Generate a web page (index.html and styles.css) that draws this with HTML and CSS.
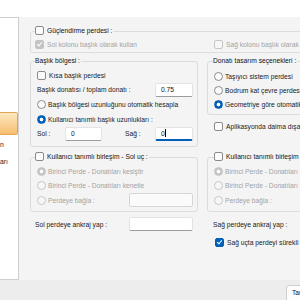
FILE: index.html
```html
<!DOCTYPE html>
<html>
<head>
<meta charset="utf-8">
<link rel="stylesheet" href="styles.css">
</head>
<body>
<div class="top"></div>
<div class="main">
  <aside class="side">
    <div class="side-btn"></div>
    <div class="side-txt first">n</div>
    <div class="side-txt second">arı</div>
  </aside>
  <div class="content">
    <fieldset class="grp g1">
      <legend><span class="cb"></span>Güçlendirme perdesi :</legend>
      <div class="cols">
        <div class="row dis"><span class="cb chk off"></span>Sol kolonu başlık olarak kullan</div>
        <div class="row dis"><span class="cb off"></span>Sağ kolonu başlık olarak kullan</div>
      </div>
    </fieldset>
    <div class="grid">
      <fieldset class="grp g2">
        <legend>Başlık bölgesi :</legend>
        <div class="row in"><span class="cb"></span>Kısa başlık perdesi</div>
        <div class="row in tall">Başlık donatısı / toplam donatı :<span class="inp w38 push">0.75</span></div>
        <div class="row in tall"><span class="rb"></span>Başlık bölgesi uzunluğunu otomatik hesapla</div>
        <div class="row in"><span class="rb on"></span>Kullanıcı tanımlı başlık uzunlukları :</div>
        <div class="row in tall"><span class="lbl-sol">Sol :</span><span class="inp w37">0</span><span class="lbl-sag">Sağ :</span><span class="inp w38 push focus">0<span class="caret"></span></span></div>
      </fieldset>
      <div class="rcol">
        <fieldset class="grp g3">
          <legend>Donatı tasarım seçenekleri :</legend>
          <div class="row in"><span class="rb"></span>Taşıyıcı sistem perdesi</div>
          <div class="row in"><span class="rb"></span>Bodrum kat çevre perdesi</div>
          <div class="row in"><span class="rb on"></span>Geometriye göre otomatik</div>
        </fieldset>
        <div class="row apl"><span class="cb"></span>Aplikasyonda daima dışarıda</div>
      </div>
      <fieldset class="grp g4">
        <legend><span class="cb"></span>Kullanıcı tanımlı birleşim - Sol uç :</legend>
        <div class="row in dis"><span class="rb on off"></span>Birinci Perde - Donatıları kesiştir</div>
        <div class="row in tall dis"><span class="rb off"></span>Birinci Perde - Donatıları kenetle</div>
        <div class="row in dis"><span class="rb off"></span>Perdeye bağla :<span class="inp w64 push disabled"></span></div>
      </fieldset>
      <fieldset class="grp g5">
        <legend><span class="cb"></span>Kullanıcı tanımlı birleşim - Sağ uç :</legend>
        <div class="row in dis"><span class="rb on off"></span>Birinci Perde - Donatıları kesiştir</div>
        <div class="row in tall dis"><span class="rb off"></span>Birinci Perde - Donatıları kenetle</div>
        <div class="row in dis"><span class="rb off"></span>Perdeye bağla :</div>
      </fieldset>
      <div class="row ank">Sol perdeye ankraj yap :<span class="inp w64 push"></span></div>
      <div class="rcol">
        <div class="row ank r">Sağ perdeye ankraj yap :</div>
        <div class="row sur"><span class="cb chk"></span>Sağ uçta perdeyi sürekli kabul et</div>
      </div>
    </div>
  </div>
</div>
<div class="footer"><span class="btn">Tamam</span></div>
</body>
</html>
```
FILE: styles.css
```css
body {
  margin: 0;
  width: 300px;
  height: 300px;
  overflow: hidden;
  background: #fff;
  color: #1a1a1a;
  font-family: "Liberation Sans", Arial, sans-serif;
  font-size: 6.7px;
}
.top {
  height: 17px;
  background: #fff;
}
.main {
  display: flex;
  height: 263px;
  background: #f4f4f4;
}
.side {
  flex: none;
  width: 19px;
  box-sizing: border-box;
  background: #fff;
  border: 1px solid #cfcfcf;
  border-left: 0;
  overflow: hidden;
}
.side-btn {
  margin-top: 94px;
  height: 23px;
  box-sizing: border-box;
  background: linear-gradient(#fde8c0, #f6bd70);
  border: 1px solid #e3a650;
  border-left: 0;
  border-radius: 0 2px 2px 0;
}
.side-txt {
  height: 10px;
  line-height: 10px;
  white-space: nowrap;
}
.side-txt.first { margin-top: 5px; }
.side-txt.second { margin-top: 7px; }

.content {
  flex: none;
  width: 400px;
  padding: 9px 0 0 11px;
}
.grp {
  margin: 0;
  min-width: 0;
  border: 1px solid #dcdcdc;
  border-radius: 3px;
  padding: 0 4px;
}
legend {
  padding: 0 1px 0 0;
  height: 10px;
  line-height: 10px;
  color: #111;
  white-space: nowrap;
}
.g1 { padding-top: 1px; padding-bottom: 1px; }
.g2 { padding-top: 2px; padding-bottom: 5px; }
.g3 { padding-top: 3px; padding-bottom: 3px; }
.g4, .g5 { padding-top: 2px; padding-bottom: 4px; }
.g3 legend { margin-left: 1px; }
.g5 legend { margin-left: 2px; }

.cols {
  display: grid;
  grid-template-columns: 179px 1fr;
}
.grid {
  margin-top: 3px;
  display: grid;
  grid-template-columns: 168px 1fr;
  column-gap: 9px;
  row-gap: 5px;
}
.row {
  height: 14px;
  display: flex;
  align-items: center;
  white-space: nowrap;
}
.row.tall { height: 15px; }
.row.in { padding-left: 2px; }
.row.apl { margin-top: 4px; padding-left: 7px; }
.row.ank { padding: 0 5px; }
.row.ank.r { padding-left: 6px; }
.row.sur { margin-top: 4px; padding-left: 8px; }
.dis { color: #a3a3a3; }

.cb, .rb {
  flex: none;
  display: inline-block;
  position: relative;
  box-sizing: border-box;
  width: 9px;
  height: 9px;
  margin-right: 3px;
  border: 1px solid #8a8a8a;
  background: #fbfbfb;
  vertical-align: -2px;
}
.cb { border-radius: 2px; }
.rb { border-radius: 50%; margin-right: 2px; }
.cb.off, .rb.off {
  border-color: #c6c6c6;
  background: #f7f7f7;
}
.cb.chk {
  background: #005fb8;
  border-color: #005fb8;
}
.cb.chk.off {
  background: #c4c4c4;
  border-color: #c4c4c4;
}
.cb.chk::after {
  content: "";
  position: absolute;
  left: 2px;
  top: 0px;
  width: 2px;
  height: 4px;
  border: solid #fff;
  border-width: 0 1px 1px 0;
  transform: rotate(40deg);
}
.rb.on {
  border-color: #005fb8;
  background: radial-gradient(circle, #fff 0 1.6px, #005fb8 2.2px);
}
.rb.on.off {
  border-color: #c4c4c4;
  background: radial-gradient(circle, #fff 0 1.6px, #c4c4c4 2.2px);
}

.inp {
  flex: none;
  position: relative;
  box-sizing: border-box;
  height: 14px;
  line-height: 12px;
  padding-left: 5px;
  background: #fff;
  border: 1px solid #e3e3e3;
  border-bottom-color: #9c9c9c;
  border-radius: 2px;
  color: #111;
}
.inp.disabled {
  background: #fafafa;
  border-color: #d6d6d6;
}
.inp.focus {
  border-bottom: 2px solid #005fb8;
}
.caret {
  display: inline-block;
  width: 1px;
  height: 8px;
  background: #000;
  vertical-align: -1px;
}
.w37 { width: 37px; }
.w38 { width: 38px; }
.w64 { width: 64px; }
.push { margin-left: auto; }
.lbl-sol { width: 28px; }
.lbl-sag { margin-left: 23px; }

.footer {
  height: 20px;
  background: #ededed;
  padding: 5px 0 0 286px;
  box-sizing: border-box;
}
.btn {
  display: inline-block;
  width: 60px;
  height: 18px;
  box-sizing: border-box;
  padding-left: 5px;
  line-height: 14px;
  background: #fdfdfd;
  border: 1px solid #cfcfcf;
  border-radius: 3px;
  color: #111;
}
```
